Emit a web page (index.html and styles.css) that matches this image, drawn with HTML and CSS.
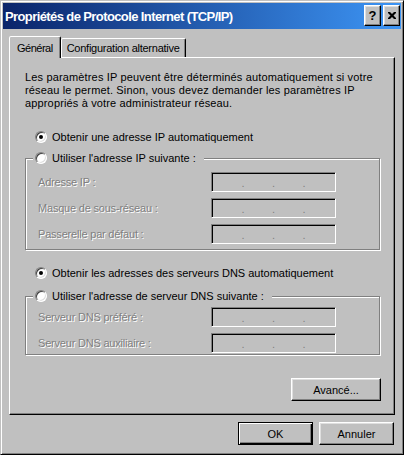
FILE: index.html
```html
<!DOCTYPE html>
<html lang="fr">
<head>
  <meta charset="UTF-8">
  <title>Propriétés de Protocole Internet (TCP/IP)</title>
  <link rel="stylesheet" href="styles.css">
</head>
<body>
  <div class="window">
    <div class="titlebar">
      <span class="title">Propriétés de Protocole Internet (TCP/IP)</span>
      <div class="title-btns">
        <button class="tbtn">?</button>
        <button class="tbtn">
          <svg width="8" height="7" viewBox="0 0 8 7"><path d="M0 0h2l2 2 2-2h2v1l-2.5 2.5L8 6v1H6L4 5 2 7H0V6l2.5-2.5L0 1z" fill="#000"/></svg>
        </button>
      </div>
    </div>

    <div class="main">
      <div class="tabs">
        <div class="tab tab-active">Général</div>
        <div class="tab">Configuration alternative</div>
      </div>

      <div class="panel">
        <p class="intro">Les paramètres IP peuvent être déterminés automatiquement si votre<br>réseau le permet. Sinon, vous devez demander les paramètres IP<br>appropriés à votre administrateur réseau.</p>

        <div class="radio-row first"><span class="radio radio-checked"></span>Obtenir une adresse IP automatiquement</div>

        <div class="group">
          <div class="legend"><span class="radio"></span>Utiliser l'adresse IP suivante :</div>
          <div class="fields">
            <div class="field"><span class="label">Adresse IP :</span><div class="ip"><span></span><i>.</i><span></span><i>.</i><span></span><i>.</i><span></span></div></div>
            <div class="field"><span class="label">Masque de sous-réseau :</span><div class="ip"><span></span><i>.</i><span></span><i>.</i><span></span><i>.</i><span></span></div></div>
            <div class="field"><span class="label">Passerelle par défaut :</span><div class="ip"><span></span><i>.</i><span></span><i>.</i><span></span><i>.</i><span></span></div></div>
          </div>
        </div>

        <div class="radio-row second"><span class="radio radio-checked"></span>Obtenir les adresses des serveurs DNS automatiquement</div>

        <div class="group group-dns">
          <div class="legend"><span class="radio"></span>Utiliser l'adresse de serveur DNS suivante :</div>
          <div class="fields">
            <div class="field"><span class="label">Serveur DNS préféré :</span><div class="ip"><span></span><i>.</i><span></span><i>.</i><span></span><i>.</i><span></span></div></div>
            <div class="field"><span class="label">Serveur DNS auxiliaire :</span><div class="ip"><span></span><i>.</i><span></span><i>.</i><span></span><i>.</i><span></span></div></div>
          </div>
        </div>

        <div class="adv-row"><button class="btn btn-adv">Avancé...</button></div>
      </div>

      <div class="actions">
        <button class="btn btn-default">OK</button>
        <button class="btn">Annuler</button>
      </div>
    </div>
  </div>
</body>
</html>
```

FILE: styles.css
```css
* {
  box-sizing: border-box;
  margin: 0;
  padding: 0;
}
body {
  background: #c0c0c0;
  font-family: "Liberation Sans", Arial, sans-serif;
  font-size: 11px;
  color: #000;
}
.window {
  width: 404px;
  height: 455px;
  border: 1px solid;
  border-color: #c0c0c0 #000 #000 #c0c0c0;
  box-shadow: inset 1px 1px #fff, inset -1px -1px #808080;
  padding: 2px;
  display: flex;
  flex-direction: column;
}
.titlebar {
  height: 26px;
  display: flex;
  align-items: center;
  padding: 0 1px 0 2px;
  background: linear-gradient(to right, #0a246a, #3d95f5);
  color: #fff;
}
.title {
  flex: 1;
  font-weight: bold;
  font-size: 13px;
  letter-spacing: -0.6px;
  white-space: nowrap;
}
.title-btns {
  display: flex;
  gap: 2px;
  margin-top: -2px;
}
.tbtn {
  width: 17px;
  height: 21px;
  background: #c0c0c0;
  border: 1px solid;
  border-color: #fff #000 #000 #fff;
  box-shadow: inset -1px -1px #808080, inset 1px 1px #dfdfdf;
  display: flex;
  align-items: center;
  justify-content: center;
  font-family: "Liberation Sans", Arial, sans-serif;
  font-weight: bold;
  font-size: 13px;
  color: #000;
}
.main {
  flex: 1;
  padding: 7px 6px 0 6px;
  display: flex;
  flex-direction: column;
}
.tabs {
  display: flex;
  align-items: flex-end;
  height: 21px;
}
.tab {
  height: 19px;
  padding: 0 5px;
  border: 1px solid;
  border-bottom: none;
  border-color: #fff #000 transparent #fff;
  box-shadow: inset -1px 0 #808080;
  border-radius: 2px 2px 0 0;
  display: flex;
  align-items: center;
  background: #c0c0c0;
  letter-spacing: -0.25px;
}
.tab-active {
  height: 22px;
  margin-bottom: -1px;
  padding: 0 7px;
  position: relative;
  z-index: 1;
  letter-spacing: -0.5px;
}
.panel {
  height: 358px;
  border: 1px solid;
  border-color: #fff #000 #000 #fff;
  box-shadow: inset -1px -1px #808080;
  padding: 13px 13px 13px 15px;
  display: flex;
  flex-direction: column;
}
.intro {
  line-height: 13px;
  letter-spacing: 0.15px;
}
.radio-row,
.legend {
  display: flex;
  align-items: center;
  height: 12px;
  line-height: 12px;
  white-space: nowrap;
}
.radio-row {
  padding-left: 10px;
}
.radio-row.first {
  margin-top: 21px;
}
.radio-row.second {
  margin-top: 17px;
}
.radio {
  width: 12px;
  height: 12px;
  border-radius: 50%;
  background: #fff;
  border: 1px solid;
  border-color: #808080 #fff #fff #808080;
  box-shadow: inset 1px 1px #404040, inset -1px -1px #dfdfdf;
  flex-shrink: 0;
  display: flex;
  align-items: center;
  justify-content: center;
  margin-right: 5px;
}
.radio-checked::after {
  content: "";
  width: 4px;
  height: 4px;
  border-radius: 50%;
  background: #000;
}
.group {
  margin-top: 15px;
  margin-right: 1px;
  border: 1px solid #808080;
  box-shadow: inset 1px 1px #fff, 1px 1px #fff;
  padding: 0 0 5px 12px;
}
.group-dns {
  margin-top: 17px;
  padding-bottom: 1px;
}
.legend {
  margin: -7px 0 0 -5px;
  padding: 0 8px 0 2px;
  width: fit-content;
  background: #c0c0c0;
}
.fields {
  margin-top: 8px;
  display: flex;
  flex-direction: column;
  gap: 6px;
}
.group-dns .fields {
  margin-top: 5px;
}
.field {
  display: flex;
  align-items: center;
  height: 20px;
}
.label {
  width: 173px;
  color: #808080;
  text-shadow: 1px 1px #fff;
  letter-spacing: -0.2px;
}
.ip {
  width: 125px;
  height: 20px;
  border: 1px solid;
  border-color: #808080 #fff #fff #808080;
  box-shadow: inset 1px 1px #000;
  display: flex;
  align-items: center;
  padding: 2px 2px 0;
}
.ip span {
  flex: 1;
}
.ip i {
  font-style: normal;
  color: #808080;
  width: 3px;
}
.adv-row {
  margin-top: 23px;
  display: flex;
  justify-content: flex-end;
}
.btn {
  height: 23px;
  width: 75px;
  background: #c0c0c0;
  border: 1px solid;
  border-color: #fff #000 #000 #fff;
  box-shadow: inset -1px -1px #808080, inset 1px 1px #dfdfdf;
  font-family: "Liberation Sans", Arial, sans-serif;
  font-size: 11px;
  color: #000;
}
.btn-adv {
  width: 90px;
}
.btn-default {
  border-color: #000;
  box-shadow: inset 1px 1px #fff, inset -1px -1px #000, inset -2px -2px #808080;
}
.actions {
  margin-top: 7px;
  display: flex;
  justify-content: flex-end;
  gap: 6px;
  padding-right: 1px;
}
```
